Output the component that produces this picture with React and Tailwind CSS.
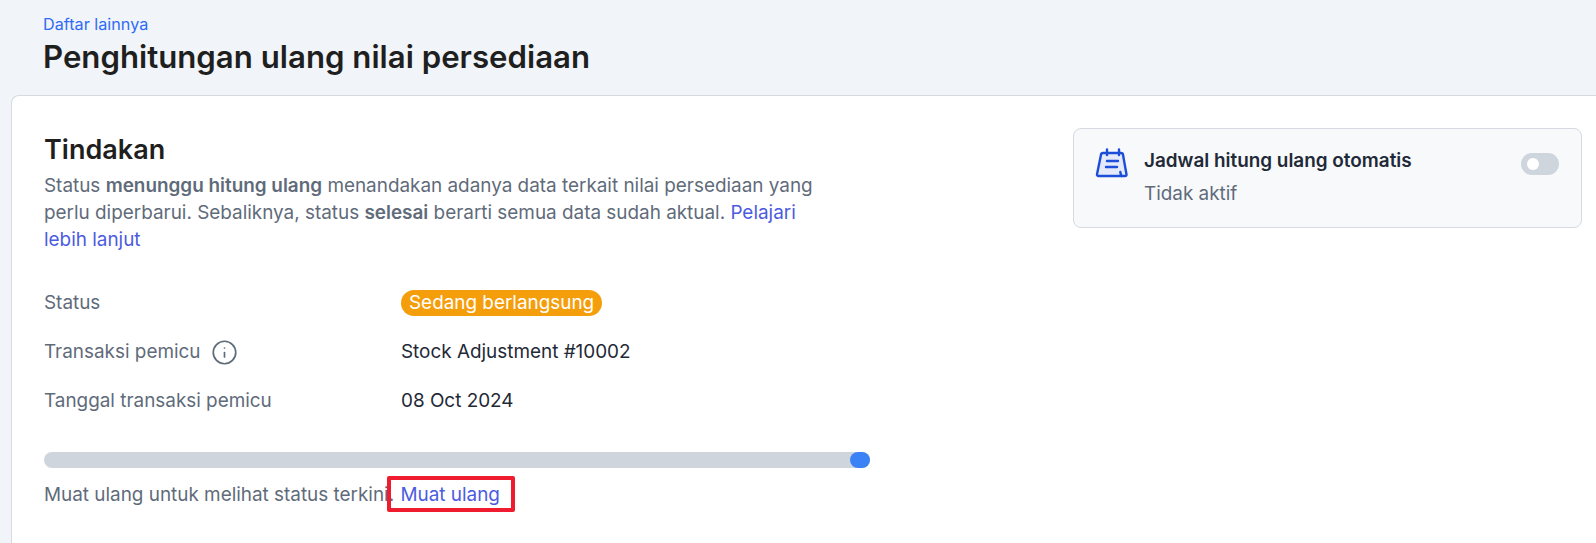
import React from 'react';
import { Info } from 'lucide-react';

const rowLabel = 'w-[357px] shrink-0 text-[#5f6b7a]';

const CalendarIcon = () => (
  <svg width="34" height="34" viewBox="0 0 34 34" fill="none" stroke="#1d4ed8" strokeWidth="2.4" strokeLinecap="round" strokeLinejoin="round">
    <path d="M8 7h18a2 2 0 0 1 2 1.8l3.5 19.7a1.5 1.5 0 0 1-1.5 1.5H3.5A1.5 1.5 0 0 1 2 28.3L6 8.8A2 2 0 0 1 8 7z" fill="#e4eafb" />
    <path d="M26.5 30c-.8-1.5-1-3-1.2-4" />
    <path d="M12 3.5v5.5M24 3.5v5.5" />
    <path d="M12 15h11M11 21h11" />
  </svg>
);

const App = () => {
  return (
    <div className="h-[543px] overflow-hidden bg-[#f1f4f9] font-['Inter',sans-serif]">
      <header className="h-[95px] pl-[43px] pt-[14px]">
        <a className="block text-[16.2px] leading-[20px] text-[#2f6bf5]">Daftar lainnya</a>
        <h1 className="mt-[3px] text-[31.2px] leading-[40px] font-semibold text-[#1f1f1f]">Penghitungan ulang nilai persediaan</h1>
      </header>

      <main className="ml-[11px] flex h-[448px] justify-between rounded-tl-[8px] border-t border-l border-[#d5dae3] bg-white pl-[32px] pr-[14px] pt-[32px]">
        <section className="w-[826px]">
          <h2 className="text-[27px] leading-[44px] font-semibold text-[#1f1f1f]">Tindakan</h2>
          <p className="w-[795px] text-[18.9px] leading-[27px] text-[#5f6b7a]">
            Status <b className="font-semibold">menunggu hitung ulang</b> menandakan adanya data terkait nilai persediaan yang perlu diperbarui. Sebaliknya, status <b className="font-semibold">selesai</b> berarti semua data sudah aktual. <a className="text-[#4c5be0]">Pelajari lebih lanjut</a>
          </p>

          <div className="mt-[37px] flex flex-col gap-[23px] text-[18.9px] leading-[26px] text-[#1f2937]">
            <div className="flex items-center">
              <span className={rowLabel}>Status</span>
              <span className="rounded-full bg-[#f59e0b] px-2 text-white">Sedang berlangsung</span>
            </div>
            <div className="flex h-[26px] items-center">
              <span className={`${rowLabel} flex items-center gap-[11px]`}>
                Transaksi pemicu <Info size={27} strokeWidth={1.5} />
              </span>
              <span>Stock Adjustment #10002</span>
            </div>
            <div className="flex items-center">
              <span className={rowLabel}>Tanggal transaksi pemicu</span>
              <span>08 Oct 2024</span>
            </div>
          </div>

          <div className="mt-[38px] flex h-[16px] justify-end rounded-full bg-[#cfd5dc]">
            <div className="h-[16px] w-[20px] rounded-full bg-[#3b82f6]" />
          </div>

          <p className="relative mt-[14px] text-[18.9px] leading-[26px] text-[#5f6b7a]">
            Muat ulang untuk melihat status terkini. <a className="ml-px text-[#4c5be0]">Muat ulang</a>
            <span className="absolute left-[343px] top-[-6px] h-[36px] w-[128px] rounded-[2px] border-[4px] border-[#ee1c2e]" />
          </p>
        </section>

        <aside className="h-[100px] w-[509px] rounded-[8px] border border-[#d5dae3] bg-[#f7f9fb] pl-[21px] pr-[22px] pt-[17px]">
          <div className="flex items-start">
            <CalendarIcon />
            <div className="ml-[15px] flex-1 pt-[2px]">
              <div className="text-[18.9px] leading-[26px] font-semibold text-[#1f2937]">Jadwal hitung ulang otomatis</div>
              <div className="mt-[7px] text-[18.9px] leading-[26px] text-[#5f6b7a]">Tidak aktif</div>
            </div>
            <div className="mt-[7px] flex h-[22px] w-[38px] items-center rounded-full bg-[#cfd5dc] pl-[6px]">
              <div className="h-[12px] w-[12px] rounded-full bg-white" />
            </div>
          </div>
        </aside>
      </main>
    </div>
  );
};

export default App;
